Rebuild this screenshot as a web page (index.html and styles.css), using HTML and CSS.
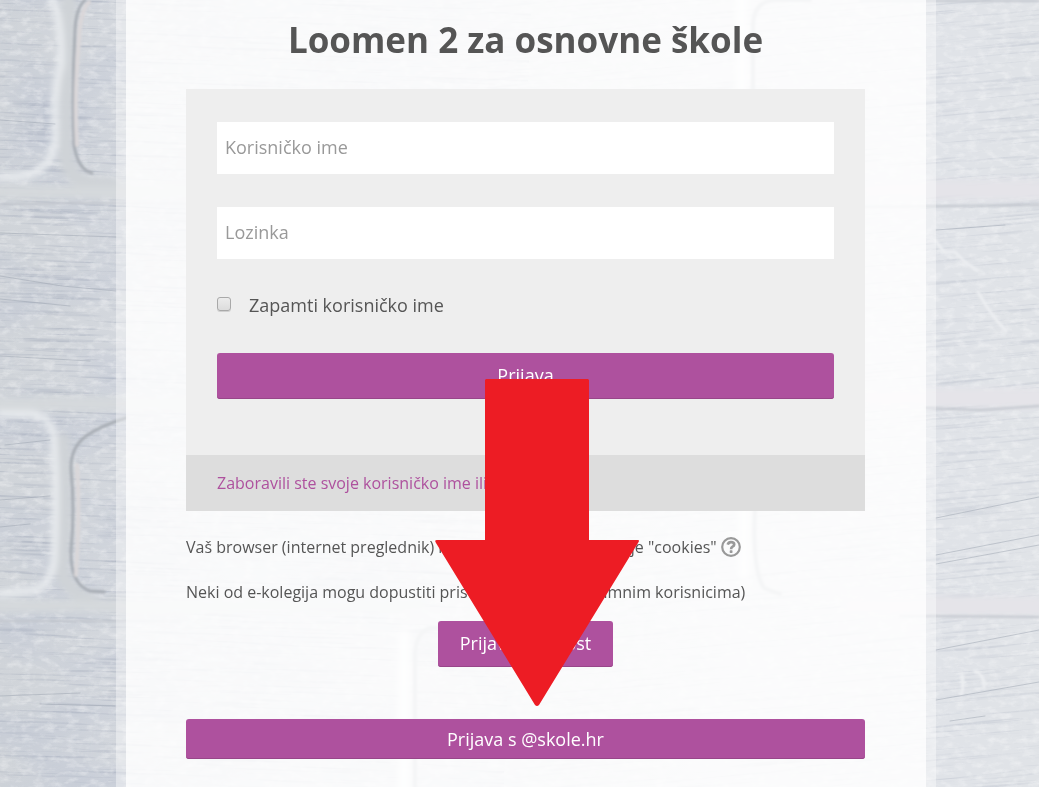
FILE: index.html
```html
<!DOCTYPE html>
<html lang="hr">
<head>
<meta charset="utf-8">
<meta name="viewport" content="width=device-width, initial-scale=1">
<title>Loomen 2 za osnovne škole</title>
<link rel="stylesheet" href="styles.css">
</head>
<body>
<svg class="wall" viewBox="0 0 1039 787" preserveAspectRatio="xMidYMin slice" aria-hidden="true">
  <defs>
    <linearGradient id="base"><stop offset="0" stop-color="#d0d4d9"/><stop offset=".12" stop-color="#d3d7dd"/><stop offset=".6" stop-color="#dddfe4"/><stop offset=".9" stop-color="#e0e3e8"/><stop offset="1" stop-color="#e0e3e7"/></linearGradient>
    <filter id="streaks" x="0" y="0" width="1" height="1" color-interpolation-filters="sRGB"><feTurbulence type="fractalNoise" baseFrequency="0.01 0.36" numOctaves="3" seed="8"/><feColorMatrix values="0 0 0 0 .5  0 0 0 0 .54  0 0 0 0 .63  3.2 0 0 0 -1.7"/></filter>
    <filter id="grain" x="0" y="0" width="1" height="1" color-interpolation-filters="sRGB"><feTurbulence type="fractalNoise" baseFrequency="0.09 0.16" numOctaves="4" seed="4"/><feColorMatrix values="0 0 0 0 1  0 0 0 0 1  0 0 0 0 1  0 2.4 0 0 -1.1"/></filter>
    <filter id="patches" x="0" y="0" width="1" height="1" color-interpolation-filters="sRGB"><feTurbulence type="fractalNoise" baseFrequency="0.01 0.02" numOctaves="2" seed="12"/><feColorMatrix values="0 0 0 0 .72  0 0 0 0 .75  0 0 0 0 .82  0 0 2 0 -.8"/></filter>
    <filter id="soft"><feGaussianBlur stdDeviation="3"/></filter>
    <filter id="fine"><feGaussianBlur stdDeviation="1"/></filter>
  </defs>
  <rect width="1039" height="787" fill="url(#base)"/>
  <rect width="520" height="787" filter="url(#patches)" opacity=".45"/>
  <g transform="rotate(2 60 300)"><rect x="-40" y="-40" width="560" height="880" filter="url(#streaks)" opacity=".32"/></g>
  <g transform="rotate(-5 900 400)"><rect x="480" y="-80" width="620" height="960" filter="url(#streaks)" opacity=".18"/></g>
  <rect width="1039" height="787" filter="url(#grain)" opacity=".35"/>
  <g fill="none" stroke-linecap="round">
    <g filter="url(#soft)">
      <path d="M68 -5Q70 40 67 85Q66 140 66 160Q70 176 84 182L116 186M63 440Q66 510 62 570Q66 590 92 602" stroke="#cfd3d7" stroke-width="14"/>
      <path d="M50 -5Q62 15 61 65Q54 85 55 125Q57 156 43 167Q30 178 0 177M0 414H30Q48 415 53 432Q58 490 54 560Q52 582 36 590L0 594" stroke="#e9ecef" stroke-width="7"/>
      <path d="M0 192H300M0 404H420M0 606H420" stroke="#d5d9dc" stroke-width="12"/>
      <path d="M870 190H1039M870 398H1039M850 606H1039" stroke="#e5e4e9" stroke-width="18"/>
      <path d="M742 -5V95M744 500V575M404 635V790" stroke="#f4f5f7" stroke-width="12"/>
    </g>
    <g filter="url(#fine)">
      <path d="M85 0Q76 8 75 30Q72 90 74 145Q78 170 92 173M126 418Q100 426 86 436Q70 448 71 470Q75 510 71 550Q70 584 90 591L104 592" stroke="#a9aeb5" stroke-width="3"/>
      <path d="M89 2Q80 12 79 40Q74 95 77 145M77 465Q80 510 76 575" stroke="#dad7d9" stroke-width="4"/>
      <path d="M0 204L80 203L250 204M0 621H180M860 207L1039 205M925 408L980 410L1039 406M900 616L1039 617M860 1H1039" stroke="#c2c6cd" stroke-width="2"/>
      <path d="M810 0H775Q754 1 753 25V90M755 510Q752 570 764 588L780 594M500 626L430 628Q416 632 415 655V790" stroke="#b5bac2" stroke-width="4"/>
      <path d="M935 240L944 252L955 252L966 263L977 270M978 292Q990 314 1006 331M962 675Q964 690 961 694M975 671Q985 675 984 688" stroke="#eceef1" stroke-width="3"/>
    </g>
    <path d="M0 233L116 237M0 276L62 286L116 291M0 120L55 124M0 299L70 306M0 356L90 361M5 445L50 440M0 500L50 496M0 527L30 524M0 696L80 693M40 704L115 706M936 230L1005 225M936 518L1039 497M936 555L1039 535M936 564L1039 545M936 650L1039 630M936 700L1039 682M950 721L985 716" stroke="#9ba3b0" stroke-width="1" opacity=".5"/>
  </g>
</svg>

<main class="page">
  <h1 class="title">Loomen 2 za osnovne škole</h1>

  <form class="login">
    <div class="fields">
      <input class="text-box" type="text" aria-label="Korisničko ime" placeholder="Korisničko ime">
      <input class="text-box" type="password" aria-label="Lozinka" placeholder="Lozinka">
      <div class="remember">
        <input class="tick" type="checkbox" id="remember">
        <label for="remember">Zapamti korisničko ime</label>
      </div>
      <button class="button" type="submit">Prijava</button>
    </div>
    <div class="forgot"><a href="#">Zaboravili ste svoje korisničko ime ili lozinku?</a></div>
  </form>

  <p class="note">Vaš browser (internet preglednik) mora imati uključene opcije "cookies"
    <button class="help" type="button" aria-label="Pomoć">
      <svg viewBox="0 0 20 20" width="20" height="20" fill="none" stroke="#999" aria-hidden="true">
        <circle cx="10" cy="10" r="8.8" stroke-width="2.2"/>
        <path d="M6.7 7.6Q7.5 5.1 10 5.1Q13.2 5.1 13.2 7.5Q13.2 8.8 11.6 9.6Q10.1 10.4 10.1 12.2" stroke-width="2.7"/>
        <rect x="8.7" y="13.3" width="2.8" height="2.6" rx=".6" fill="#999" stroke="none"/>
      </svg>
    </button>
  </p>
  <p class="note">Neki od e-kolegija mogu dopustiti pristup gostima (anonimnim korisnicima)</p>

  <button class="button guest" type="button">Prijava kao gost</button>
  <button class="button school" type="button">Prijava s @skole.hr</button>

  <svg class="arrow" viewBox="0 0 204 327" aria-hidden="true">
    <path d="M51 0H153L154 1V161H203Q205 161 203 164L104 326Q102 328 100 326L1 164Q-1 161 2 161H50V1Z" fill="#ed1c24"/>
  </svg>
</main>
</body>
</html>
```

FILE: styles.css
```css
* {
  box-sizing: border-box;
}

body {
  margin: 0;
  min-height: 100vh;
  display: flex;
  background: #dcdfe4;
  color: #555;
  font: 16px/24px "Open Sans", "Noto Sans", sans-serif;
}

.wall {
  position: fixed;
  inset: 0;
  width: 100%;
  height: 100%;
  z-index: -1;
}

.page {
  position: relative;
  flex: 1;
  display: flex;
  flex-direction: column;
  margin: 0 103px 0 116px;
  padding: 16px 61px 28px 60px;
  border: solid rgba(255, 255, 255, 0.4);
  border-width: 0 10px;
  background: rgba(255, 255, 255, 0.86);
  background-clip: padding-box;
}

.title {
  margin: 0 0 25px;
  font-size: 35px;
  line-height: 48px;
  font-weight: 700;
  text-align: center;
}

.login {
  background: #eee;
}

.fields {
  display: flex;
  flex-direction: column;
  padding: 33px 31px 56px;
}

.text-box {
  width: 100%;
  height: 52px;
  margin: 0 0 33px;
  padding: 0 8px 2px;
  border: 0;
  background: #fff;
  color: #555;
  font: inherit;
  font-size: 18px;
}

.text-box::placeholder {
  color: #999;
  opacity: 1;
}

.remember {
  display: flex;
  align-items: center;
  gap: 18px;
  margin-bottom: 34px;
  font-size: 18px;
  line-height: 27px;
}

.tick {
  appearance: none;
  width: 14px;
  height: 14px;
  margin: 0 0 3px;
  border: 1px solid #a9a9a9;
  border-radius: 3px;
  background: linear-gradient(#ececec, #dcdcdc);
  box-shadow: 0 1px 0 #d0d0d0;
}

.button {
  height: 46px;
  padding: 0 22px 2px;
  border: 0;
  border-radius: 3px;
  background: #ae519e;
  box-shadow: inset 0 -1px 0 #984689;
  color: #fff;
  font: inherit;
  font-size: 18px;
}

.forgot {
  padding: 16px 31px;
  background: #ddd;
}

.forgot a {
  color: #ae519e;
  text-decoration: none;
}

.note {
  display: flex;
  align-items: center;
  gap: 4px;
  margin: 24px 0 0;
}

.note + .note {
  margin-top: 21px;
}

.help {
  display: flex;
  padding: 0;
  border: 0;
  background: none;
}

.guest {
  align-self: center;
  margin: 17px 0 52px;
}

.school {
  height: 40px;
  padding-bottom: 0;
}

.arrow {
  position: absolute;
  top: 379px;
  left: 50%;
  width: 204px;
  margin-left: -91px;
}
```
